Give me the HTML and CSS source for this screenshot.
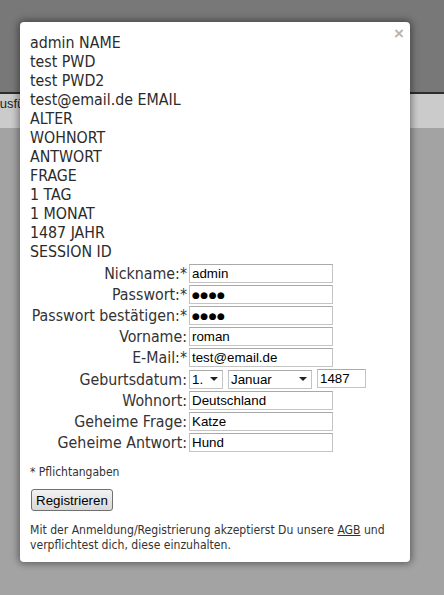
FILE: index.html
```html
<!DOCTYPE html>
<html lang="de">
<head>
  <meta charset="UTF-8">
  <meta name="viewport" content="width=device-width, initial-scale=1.0">
  <title>Registrieren</title>
  <link rel="stylesheet" href="styles.css">
</head>
<body>

  <header class="site-head">
    <span class="site-title">Kommunion</span>
  </header>
  <nav class="site-nav">
    <span class="nav-item">Ausführen</span>
  </nav>
  <main class="site-main"></main>

  <div class="modal">
    <span class="modal-close">&times;</span>

    <div class="debug">
      <div>admin NAME</div>
      <div>test PWD</div>
      <div>test PWD2</div>
      <div>test@email.de EMAIL</div>
      <div>ALTER</div>
      <div>WOHNORT</div>
      <div>ANTWORT</div>
      <div>FRAGE</div>
      <div>1 TAG</div>
      <div>1 MONAT</div>
      <div>1487 JAHR</div>
      <div>SESSION ID</div>
    </div>

    <form class="reg-form" id="regForm">
      <label for="nick">Nickname:*</label>
      <input class="field" type="text" id="nick" value="admin">

      <label for="pwd">Passwort:*</label>
      <input class="field mask" type="text" id="pwd" value="●●●●">

      <label for="pwd2">Passwort bestätigen:*</label>
      <input class="field mask" type="text" id="pwd2" value="●●●●">

      <label for="vorname">Vorname:</label>
      <input class="field" type="text" id="vorname" value="roman">

      <label for="email">E-Mail:*</label>
      <input class="field" type="text" id="email" value="test@email.de">

      <label for="tag">Geburtsdatum:</label>
      <div class="date-row">
        <span class="pick pick-day">
          <select id="tag"><option>1.</option></select>
        </span>
        <span class="pick pick-month">
          <select id="monat"><option>Januar</option></select>
        </span>
        <input class="field field-year" type="text" id="jahr" value="1487">
      </div>

      <label for="wohnort">Wohnort:</label>
      <input class="field" type="text" id="wohnort" value="Deutschland">

      <label for="frage">Geheime Frage:</label>
      <input class="field" type="text" id="frage" value="Katze">

      <label for="antwort">Geheime Antwort:</label>
      <input class="field" type="text" id="antwort" value="Hund">
    </form>

    <p class="hint">* Pflichtangaben</p>

    <button class="btn" type="button">Registrieren</button>

    <p class="terms">Mit der Anmeldung/Registrierung akzeptierst Du unsere <a href="#">AGB</a> und verpflichtest dich, diese einzuhalten.</p>
  </div>

</body>
</html>
```

FILE: styles.css
```css
html, body {
  height: 100%;
}

body {
  margin: 0;
  display: flex;
  flex-direction: column;
  background-color: #a3a3a3;
  font-family: "DejaVu Sans Condensed", "DejaVu Sans", sans-serif;
  font-stretch: condensed;
  color: #333;
  overflow: hidden;
}

/* page behind the overlay */
.site-head {
  height: 92px;
  background-color: #787878;
  border-bottom: 2px solid #2d2d2d;
  overflow: hidden;
}

.site-title {
  display: block;
  margin: 14px 0 0 -212px;
  font-family: "Open Sans", sans-serif;
  font-weight: 300;
  font-size: 46px;
  color: #8d8d8d;
  white-space: nowrap;
}

.site-nav {
  height: 34px;
  background-color: #cbcbcb;
  overflow: hidden;
}

.nav-item {
  display: block;
  margin: 2px 0 0 -9px;
  font-family: "Liberation Sans", Arial, sans-serif;
  font-size: 13px;
  color: #222;
}

.site-main {
  flex: 1;
}

/* dialog */
.modal {
  position: absolute;
  left: 20px;
  top: 22px;
  width: 390px;
  box-sizing: border-box;
  padding: 11px 10px 9px;
  background-color: #fff;
  border-radius: 4px;
  box-shadow: 0 0 7px 2px rgba(0, 0, 0, 0.4);
}

.modal-close {
  position: absolute;
  top: 2px;
  right: 6px;
  font-family: "Liberation Sans", Arial, sans-serif;
  font-weight: bold;
  font-size: 17px;
  color: #b5b5b5;
}

.debug {
  font-size: 15.8px;
  line-height: 19px;
  color: #2b2b2b;
}

.reg-form {
  display: grid;
  grid-template-columns: 157px auto;
  column-gap: 2px;
  row-gap: 2px;
  margin-top: 3px;
  align-items: center;
}

.reg-form label {
  text-align: right;
  font-size: 15.8px;
  line-height: 19px;
  white-space: nowrap;
}

.field {
  width: 144px;
  height: 19px;
  box-sizing: border-box;
  margin: 0;
  padding: 0 2px;
  border: 1px solid #c4c4c4;
  border-top-color: #a9a9a9;
  font-family: "Liberation Sans", Arial, sans-serif;
  font-size: 13.33px;
  color: #000;
  background: #fff;
}

.mask {
  font-family: "DejaVu Sans", sans-serif;
  font-size: 9px;
  letter-spacing: 0.5px;
}

.date-row {
  display: flex;
  gap: 5px;
}

.pick {
  position: relative;
  display: inline-block;
}

.pick select {
  -webkit-appearance: none;
  appearance: none;
  height: 19px;
  box-sizing: border-box;
  margin: 0;
  padding: 0 2px;
  border: 1px solid #c4c4c4;
  border-top-color: #a9a9a9;
  border-radius: 0;
  background: #fff;
  font-family: "Liberation Sans", Arial, sans-serif;
  font-size: 13.33px;
  color: #000;
}

.pick::after {
  content: "";
  position: absolute;
  right: 5px;
  top: 8px;
  border-left: 4px solid transparent;
  border-right: 4px solid transparent;
  border-top: 4px solid #222;
  pointer-events: none;
}

.pick-day select {
  width: 34px;
}

.pick-month select {
  width: 84px;
}

.field-year {
  width: 49px;
}

.hint {
  margin: 13px 0 0;
  font-size: 12px;
  line-height: 14px;
}

.btn {
  margin: 10px 0 0 1px;
  height: 22px;
  padding: 0 4px;
  border: 1px solid #707070;
  border-radius: 3px;
  background: linear-gradient(#f2f2f2, #e5e5e5 50%, #d8d8d8);
  font-family: "Liberation Sans", Arial, sans-serif;
  font-size: 13.33px;
  color: #000;
}

.terms {
  margin: 12px 0 0;
  font-size: 12.1px;
  line-height: 15px;
}

.terms a {
  color: #333;
}
```
